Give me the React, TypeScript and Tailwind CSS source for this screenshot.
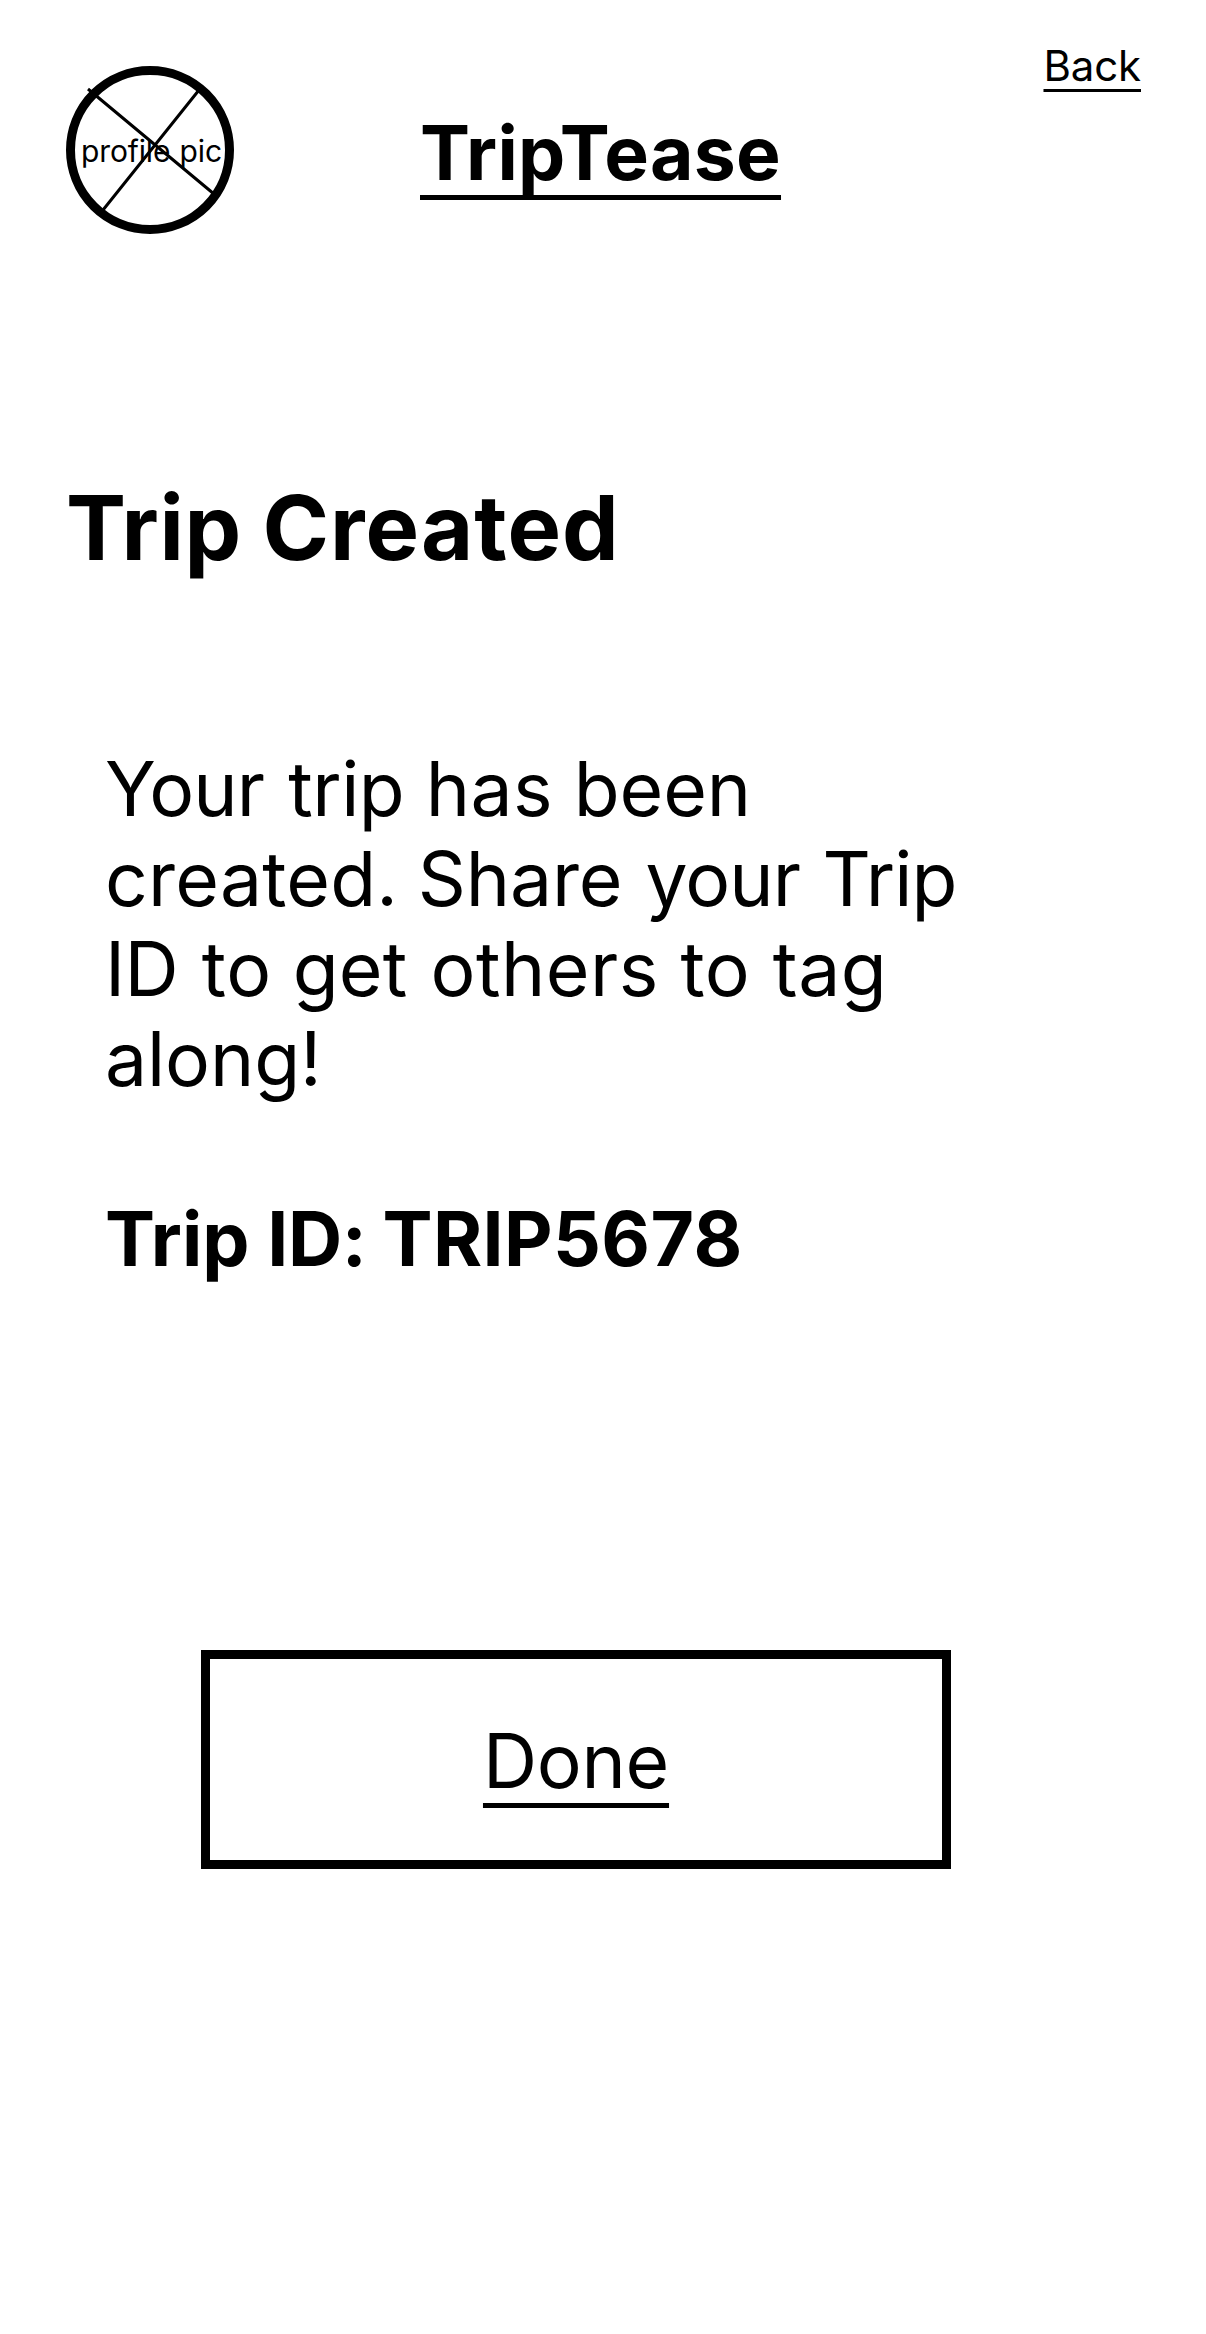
function ProfilePicture() {
  return (
    <div className="relative flex size-[168px] shrink-0 items-center justify-center rounded-full border-[9px] border-black">
      <span className="whitespace-nowrap pl-[3px] pt-[2px] text-[30px] leading-[36px] tracking-[-0.15px]">
        profile <span className="ml-[1px]">pic</span>
      </span>
      <svg
        className="absolute -left-[9px] -top-[9px]"
        width="168"
        height="168"
        viewBox="0 0 168 168"
        fill="none"
        stroke="black"
        strokeWidth="3"
      >
        <path d="M22 23L148 128M133 24L37 144" />
      </svg>
    </div>
  );
}

export default function App() {
  return (
    <main className="flex h-[2334px] w-[1206px] flex-col items-start overflow-hidden bg-white font-['Inter',sans-serif] text-black">
      <header className="flex h-[234px] w-full items-start pl-[66px] pr-[65px]">
        <div className="pt-[66px]">
          <ProfilePicture />
        </div>
        <h1 className="ml-[186px] mt-[108px] whitespace-nowrap text-[75px] font-bold leading-[90px] tracking-[0.28px] underline decoration-[5px] underline-offset-[15px] [text-decoration-skip-ink:none]">
          TripTease
        </h1>
        <a className="ml-auto mt-[41px] text-[42px] leading-[50px] tracking-[-0.15px] underline decoration-[3px] underline-offset-[8px]">
          Back
        </a>
      </header>
      <h2 className="ml-[66px] mt-[240px] whitespace-nowrap text-[90px] font-bold leading-[108px]">
        <span className="tracking-[0.6px]">Trip</span> <span className="-ml-[0.6px] tracking-[1px]">Created</span>
      </h2>
      <section className="ml-[105px] mt-[162px] w-[900px] whitespace-nowrap text-[75px] leading-[90px]">
        <p>
          <span className="tracking-[-0.9px]">Your</span> <span className="ml-[3px] tracking-[-0.5px]">trip</span>{" "}
          <span className="ml-[0.5px] tracking-[0.3px]">has</span> <span className="-ml-[0.2px] tracking-[-0.1px]">been</span>
          <br />
          <span className="tracking-[0.2px]">created.</span> <span className="-ml-[1.5px] tracking-[-0.1px]">Share</span>{" "}
          <span className="ml-[1.9px] tracking-[-0.9px]">your</span>{" "}
          <span className="ml-[1.2px] tracking-[-0.9px]">Trip</span>
          <br />
          <span className="tracking-[-0.6px]">ID</span> <span className="ml-[2.7px] tracking-[0.5px]">to</span>{" "}
          <span className="tracking-[0.1px]">get</span> <span className="ml-[2.1px] tracking-[0.5px]">others</span>{" "}
          <span className="ml-[0.6px] tracking-[0.4px]">to</span> <span className="ml-[1.6px] tracking-[0.4px]">tag</span>
          <br />
          <span className="tracking-[-0.1px]">along!</span>
        </p>
        <p className="mt-[90px] font-bold">
          Trip <span className="tracking-[-0.4px]">ID:</span> <span className="-ml-[1.7px] tracking-[0.4px]">TRIP5678</span>
        </p>
      </section>
      <button className="ml-[201px] mt-[366px] flex h-[219px] w-[750px] items-center justify-center border-[9px] border-black text-[75px] leading-[90px]">
        <span className="pt-[3px] tracking-[-0.27px] underline decoration-[5px] underline-offset-[15px]">Done</span>
      </button>
    </main>
  );
}
